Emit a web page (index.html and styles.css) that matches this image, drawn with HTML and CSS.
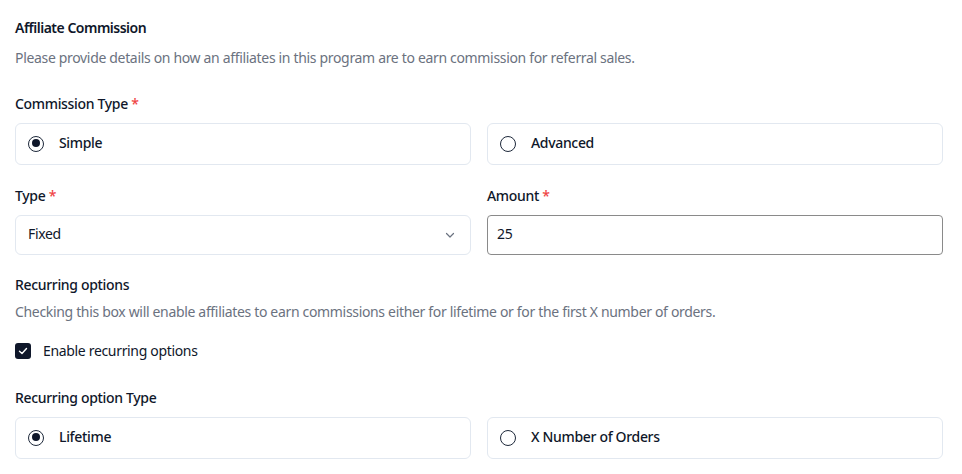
FILE: index.html
```html
<!DOCTYPE html>
<html>
<head>
<meta charset="utf-8">
<link rel="stylesheet" href="styles.css">
</head>
<body>
<div class="page">
  <h2 class="title">Affiliate Commission</h2>
  <p class="desc">Please provide details on how an affiliates in this program are to earn commission for referral sales.</p>

  <div class="label lbl-first">Commission Type <span class="req">*</span></div>
  <div class="grid">
    <div class="card"><span class="radio checked"></span><span class="card-text">Simple</span></div>
    <div class="card"><span class="radio"></span><span class="card-text">Advanced</span></div>
  </div>

  <div class="grid fields">
    <div class="field">
      <div class="label">Type <span class="req">*</span></div>
      <div class="select">
        <span>Fixed</span>
        <svg class="chev" width="12" height="12" viewBox="0 0 12 12"><path d="M2.5 4.5 L6 8 L9.5 4.5" fill="none" stroke="#6b7280" stroke-width="1.2" stroke-linecap="round" stroke-linejoin="round"/></svg>
      </div>
    </div>
    <div class="field">
      <div class="label">Amount <span class="req">*</span></div>
      <div class="input">25</div>
    </div>
  </div>

  <div class="label lbl-rec">Recurring options</div>
  <p class="desc desc2">Checking this box will enable affiliates to earn commissions either for lifetime or for the first X number of orders.</p>

  <div class="check-row">
    <span class="checkbox"><svg width="16" height="16" viewBox="0 0 16 16"><path d="M4.5 8.2 L7 10.5 L11.5 5.5" fill="none" stroke="#fff" stroke-width="1.4" stroke-linecap="round" stroke-linejoin="round"/></svg></span>
    <span class="check-text">Enable recurring options</span>
  </div>

  <div class="label lbl-rot">Recurring option Type</div>
  <div class="grid">
    <div class="card"><span class="radio checked"></span><span class="card-text">Lifetime</span></div>
    <div class="card"><span class="radio"></span><span class="card-text">X Number of Orders</span></div>
  </div>
</div>
</body>
</html>
```

FILE: styles.css
```css
* { box-sizing: border-box; }
html, body { margin: 0; padding: 0; background: #fff; }
body {
  font-family: "Noto Sans", "Open Sans", sans-serif;
  font-size: 14px;
  color: #0f172a;
  letter-spacing: -0.33px;
}
.page {
  width: 928px;
  margin-left: 15px;
  padding-top: 18px;
}
.title {
  margin: 0;
  font-size: 14px;
  font-weight: 600;
  line-height: 20px;
  letter-spacing: -0.5px;
}
.desc {
  margin: 10px 0 0;
  color: #6b7280;
  line-height: 20px;
}
.label {
  line-height: 20px;
  font-weight: 500;
}
.req { color: #ef4444; }
.lbl-first { margin-top: 26px; }
.grid {
  display: grid;
  grid-template-columns: 1fr 1fr;
  column-gap: 16px;
  margin-top: 9px;
}
.card {
  height: 42px;
  border: 1px solid #e2e8f0;
  border-radius: 6px;
  display: flex;
  align-items: center;
  padding: 0 0 3px 12px;
}
.radio {
  width: 16px;
  height: 16px;
  border: 1.5px solid #1e293b;
  border-radius: 50%;
  position: relative;
  flex: none;
  margin-top: 2px;
}
.radio.checked::after {
  content: "";
  position: absolute;
  left: 2.5px; top: 2.5px;
  width: 8px; height: 8px;
  border-radius: 50%;
  background: #0f172a;
}
.card-text {
  margin-left: 15px;
  font-weight: 500;
}
.fields { margin-top: 21px; }
.field .label { margin-bottom: 9px; }
.select, .input {
  height: 40px;
  display: flex;
  align-items: center;
  padding: 0 12px 3px;
}
.select {
  border: 1px solid #e2e8f0;
  border-radius: 6px;
  justify-content: space-between;
}
.chev { margin-right: 2px; margin-top: 2px; }
.input {
  border: 1px solid #8a8a8a;
  border-radius: 4px;
  padding-left: 9px;
}
.lbl-rec { margin-top: 20px; }
.desc2 { margin-top: 7px; }
.check-row {
  margin-top: 18px;
  display: flex;
  align-items: center;
  height: 20px;
}
.checkbox {
  width: 16px;
  height: 16px;
  border-radius: 3px;
  background: #0f172a;
  display: block;
  flex: none;
  margin-top: 2px;
}
.checkbox svg { display: block; }
.check-text {
  margin-left: 12px;
}
.lbl-rot { margin-top: 28px; }
```
